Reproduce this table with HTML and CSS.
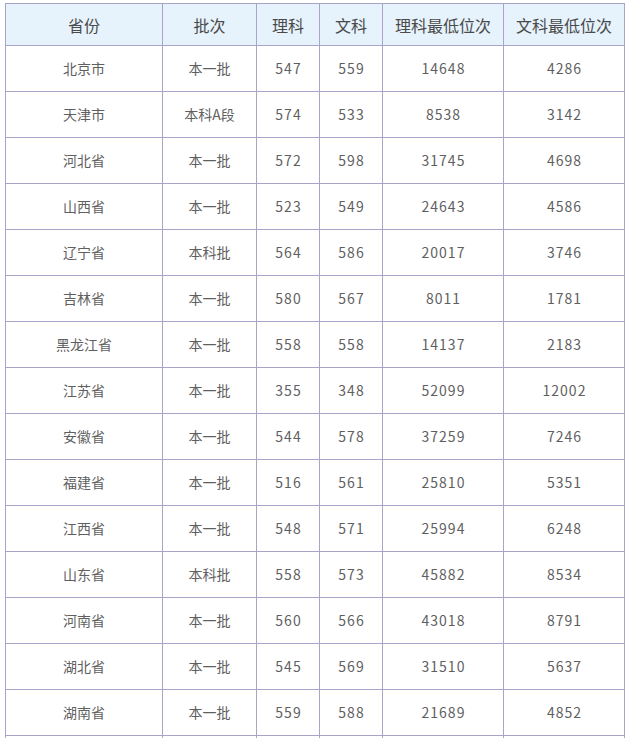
FILE: index.html
```html
<!DOCTYPE html>
<html lang="zh-CN">
<head>
<meta charset="utf-8">
<link rel="stylesheet" href="styles.css">
</head>
<body>
<table class="score-table">
  <colgroup>
    <col class="c1"><col class="c2"><col class="c3"><col class="c4"><col class="c5"><col class="c6">
  </colgroup>
  <thead>
    <tr><th>省份</th><th>批次</th><th>理科</th><th>文科</th><th>理科最低位次</th><th>文科最低位次</th></tr>
  </thead>
  <tbody>
    <tr><td>北京市</td><td>本一批</td><td>547</td><td>559</td><td>14648</td><td>4286</td></tr>
    <tr><td>天津市</td><td>本科A段</td><td>574</td><td>533</td><td>8538</td><td>3142</td></tr>
    <tr><td>河北省</td><td>本一批</td><td>572</td><td>598</td><td>31745</td><td>4698</td></tr>
    <tr><td>山西省</td><td>本一批</td><td>523</td><td>549</td><td>24643</td><td>4586</td></tr>
    <tr><td>辽宁省</td><td>本科批</td><td>564</td><td>586</td><td>20017</td><td>3746</td></tr>
    <tr><td>吉林省</td><td>本一批</td><td>580</td><td>567</td><td>8011</td><td>1781</td></tr>
    <tr><td>黑龙江省</td><td>本一批</td><td>558</td><td>558</td><td>14137</td><td>2183</td></tr>
    <tr><td>江苏省</td><td>本一批</td><td>355</td><td>348</td><td>52099</td><td>12002</td></tr>
    <tr><td>安徽省</td><td>本一批</td><td>544</td><td>578</td><td>37259</td><td>7246</td></tr>
    <tr><td>福建省</td><td>本一批</td><td>516</td><td>561</td><td>25810</td><td>5351</td></tr>
    <tr><td>江西省</td><td>本一批</td><td>548</td><td>571</td><td>25994</td><td>6248</td></tr>
    <tr><td>山东省</td><td>本科批</td><td>558</td><td>573</td><td>45882</td><td>8534</td></tr>
    <tr><td>河南省</td><td>本一批</td><td>560</td><td>566</td><td>43018</td><td>8791</td></tr>
    <tr><td>湖北省</td><td>本一批</td><td>545</td><td>569</td><td>31510</td><td>5637</td></tr>
    <tr><td>湖南省</td><td>本一批</td><td>559</td><td>588</td><td>21689</td><td>4852</td></tr>
    <tr><td></td><td></td><td></td><td></td><td></td><td></td></tr>
  </tbody>
</table>
</body>
</html>
```

FILE: styles.css
```css
html, body {
  background: #ffffff;
}
body {
  margin: 3px 0 0 5px;
  font-family: "Noto Sans CJK SC", "Noto Sans", sans-serif;
  color: #5f5f5f;
}
.score-table {
  border-collapse: collapse;
  table-layout: fixed;
  width: 620px;
}
.c1 { width: 157px; }
.c2 { width: 94px; }
.c3 { width: 63px; }
.c4 { width: 63px; }
.c5 { width: 121px; }
.c6 { width: 121px; }
.score-table th,
.score-table td {
  border: 1px solid #aaa5c8;
  text-align: center;
  padding: 0;
  white-space: nowrap;
}
.score-table th {
  background: #e6f3fd;
  height: 41px;
  font-size: 16px;
  font-weight: normal;
  color: #4a4a4a;
}
.score-table td {
  height: 44px;
  padding-bottom: 1px;
  font-size: 14px;
  color: #5f5f5f;
}
.score-table td:nth-child(n+3) {
  letter-spacing: 1px;
  text-indent: 1px;
}
```
